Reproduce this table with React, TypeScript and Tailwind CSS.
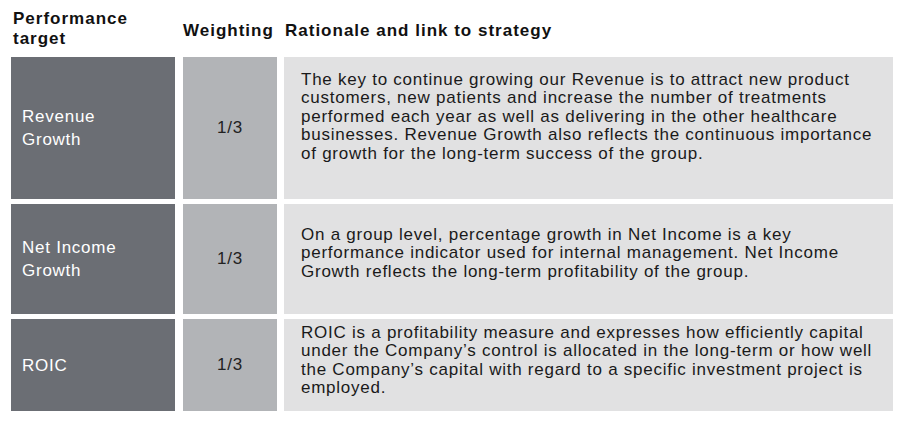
const rows = [
  {
    target: ["Revenue", "Growth"],
    weight: "1/3",
    height: "h-[142px]",
    pad: "pt-[14px]",
    text: "The key to continue growing our Revenue is to attract new product customers, new patients and increase the number of treatments performed each year as well as delivering in the other healthcare businesses. Revenue Growth also reflects the continuous importance of growth for the long-term success of the group.",
  },
  {
    target: ["Net Income", "Growth"],
    weight: "1/3",
    height: "h-[110px]",
    pad: "pt-[22px]",
    text: "On a group level, percentage growth in Net Income is a key performance indicator used for internal management. Net Income Growth reflects the long-term profitability of the group.",
  },
  {
    target: ["ROIC"],
    weight: "1/3",
    height: "h-[92px]",
    pad: "pt-[5px]",
    text: "ROIC is a profitability measure and expresses how efficiently capital under the Company\u2019s control is allocated in the long-term or how well the Company\u2019s capital with regard to a specific investment project is employed.",
  },
];

export default function App() {
  return (
    <div className="w-[902px] h-[423px] bg-white pl-[11px] font-['Liberation_Sans',Arial,sans-serif] text-[17px] leading-[18.4px] tracking-[0.75px]">
      {/* Header */}
      <div className="flex h-[57px] items-center font-bold text-[#111] tracking-[1px]">
        <div className="w-[164px] pl-[2px] leading-[20px]">
          Performance
          <br />
          target
        </div>
        <div className="ml-[8px] w-[94px] pt-[5px]">Weighting</div>
        <div className="ml-[7px] pl-[1px] pt-[5px]">Rationale and link to strategy</div>
      </div>

      {/* Rows */}
      <div className="flex flex-col gap-[5px]">
        {rows.map((row) => (
          <div key={row.target.join(" ")} className={`flex ${row.height}`}>
            <div className="flex w-[164px] items-center bg-[#6b6e74] px-[11px] leading-[23px] text-white">
              <div>
                {row.target.map((line) => (
                  <div key={line}>{line}</div>
                ))}
              </div>
            </div>
            <div className="ml-[8px] flex w-[94px] items-center justify-center bg-[#b2b4b7] text-[#222]">
              {row.weight}
            </div>
            <div className={`ml-[7px] w-[609px] bg-[#e1e1e2] pl-[17px] pr-[6px] text-[#1a1a1a] ${row.pad}`}>
              <p>{row.text}</p>
            </div>
          </div>
        ))}
      </div>
    </div>
  );
}
